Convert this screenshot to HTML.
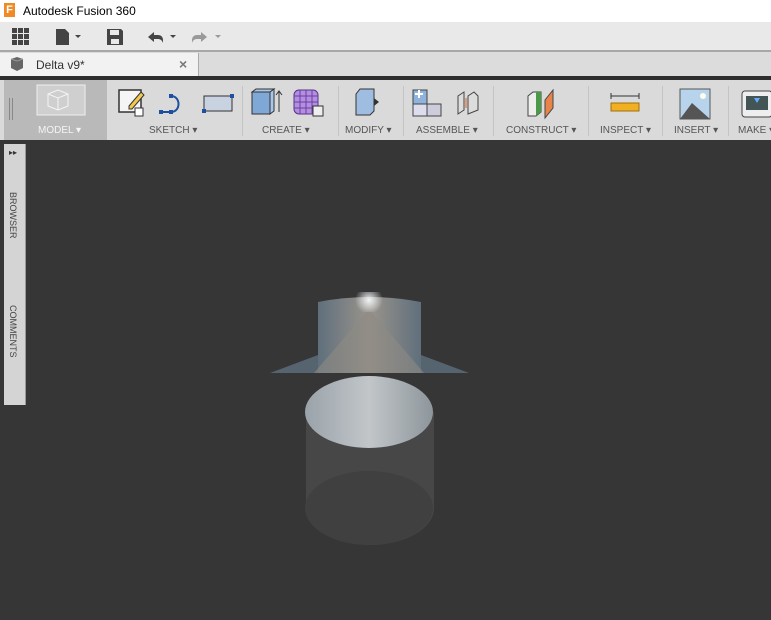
<!DOCTYPE html>
<html><head><style>
body{margin:0;width:771px;height:620px;overflow:hidden;background:#363636;font-family:"Liberation Sans",sans-serif;position:relative}
.a{position:absolute}
.lbl{position:absolute;top:125px;font-size:10px;color:#555;white-space:nowrap}
.sep{position:absolute;top:86px;width:1px;height:50px;background:#c4c4c4}
</style></head><body>
<div class="a" style="left:0;top:0;width:771px;height:22px;background:#fff"></div>
<div class="a" style="left:4px;top:3px;width:11px;height:14px;background:#f08a24;color:#fff;font-size:11px;font-weight:bold;line-height:14px;text-align:center">F</div>
<div class="a" style="left:23px;top:4px;font-size:12px;color:#000">Autodesk Fusion 360</div>
<div class="a" style="left:0;top:22px;width:771px;height:30px;background:#e9e9e9;border-bottom:2px solid #a8a8a8;box-sizing:border-box"></div>
<svg class="a" style="left:0;top:22px" width="240" height="30">
<g fill="#444"><rect x="12" y="6" width="5" height="5"/><rect x="18" y="6" width="5" height="5"/><rect x="24" y="6" width="5" height="5"/><rect x="12" y="12" width="5" height="5"/><rect x="18" y="12" width="5" height="5"/><rect x="24" y="12" width="5" height="5"/><rect x="12" y="18" width="5" height="5"/><rect x="18" y="18" width="5" height="5"/><rect x="24" y="18" width="5" height="5"/>
<path d="M56 7h9l4 4v12h-13z"/><path d="M75 13h6l-3 3z"/>
<path d="M107 7h14l2 2v14h-16z"/></g><rect x="110" y="8" width="9" height="5" fill="#e9e9e9"/><rect x="111" y="17" width="8" height="5" fill="#e9e9e9"/>
<path d="M148 15l6-5v3h4c3 0 5 2 5 5v3c-1-3-3-4-5-4h-4v3z" fill="#444"/><path d="M170 13h6l-3 3z" fill="#444"/>
<path d="M207 15l-6-5v3h-4c-3 0-5 2-5 5v3c1-3 3-4 5-4h4v3z" fill="#999"/><path d="M215 13h6l-3 3z" fill="#999"/>
</svg>
<div class="a" style="left:0;top:52px;width:771px;height:24px;background:#dcdcdc"></div>
<div class="a" style="left:0;top:53px;width:198px;height:23px;background:#f2f2f2;border-right:1px solid #aaa"></div>
<svg class="a" style="left:9px;top:56px" width="16" height="16"><path d="M2 3l6-2 6 2v9l-6 3-6-3z" fill="#666"/><path d="M2 3l6 2 6-2" stroke="#999" fill="none"/></svg>
<div class="a" style="left:36px;top:58px;font-size:12px;color:#333">Delta v9*</div>
<div class="a" style="left:179px;top:56px;font-size:14px;color:#777;font-weight:bold">×</div>
<div class="a" style="left:0;top:76px;width:771px;height:4px;background:#2e2e2e"></div>
<div class="a" style="left:0;top:80px;width:771px;height:60px;background:#dadada"></div>
<div class="a" style="left:4px;top:80px;width:103px;height:60px;background:#b9b9b9"></div>
<div class="a" style="left:9px;top:98px;height:22px;border-left:1px solid #888;border-right:1px solid #888;width:2px"></div>
<svg class="a" style="left:36px;top:84px" width="50" height="32"><rect x="1" y="1" width="48" height="30" fill="#cfcfcf" stroke="#eee"/><path d="M12 10l10-4 10 4v12l-10 4-10-4z M12 10l10 4 10-4 M22 14v12" stroke="#f4f4f4" fill="none"/></svg>
<div class="lbl" style="left:38px;color:#f4f4f4">MODEL ▾</div>
<svg class="a" style="left:115px;top:86px" width="125" height="34">
<rect x="4" y="4" width="22" height="22" fill="#f5f5f5" stroke="#333" stroke-width="1.5"/><path d="M14 20l12-14 3 3-12 14h-3z" fill="#f2c94c" stroke="#333"/><path d="M20 22h8v8h-8z" fill="#fff" stroke="#333"/>
<path d="M46 26h10c10 0 10-16 0-16" stroke="#1f4f9f" stroke-width="2" fill="none"/><rect x="44" y="24" width="4" height="4" fill="#1f4f9f"/><rect x="54" y="24" width="4" height="4" fill="#1f4f9f"/><rect x="54" y="8" width="4" height="4" fill="#1f4f9f"/>
<rect x="89" y="10" width="28" height="15" fill="#c9d2e0" stroke="#333"/><rect x="87" y="23" width="4" height="4" fill="#1f4f9f"/><rect x="115" y="8" width="4" height="4" fill="#1f4f9f"/>
</svg>
<div class="lbl" style="left:149px">SKETCH ▾</div>
<div class="sep" style="left:242px"></div>
<svg class="a" style="left:248px;top:86px" width="80" height="34">
<path d="M4 6h18v22h-18z" fill="#7fa8d6" stroke="#333"/><path d="M4 6l4-3h18l-4 3zM22 6l4-3v22l-4 3z" fill="#a9c7e8" stroke="#333"/><path d="M31 26v-20M28 9l3-4 3 4" stroke="#333" fill="none"/>
<rect x="46" y="4" width="24" height="24" rx="5" fill="#b48ee0" stroke="#553388"/><path d="M52 4v24M58 4v24M64 4v24M46 10h24M46 16h24M46 22h24" stroke="#6a3fa0"/><rect x="65" y="20" width="10" height="10" fill="#eee" stroke="#333"/>
</svg>
<div class="lbl" style="left:262px">CREATE ▾</div>
<div class="sep" style="left:338px"></div>
<svg class="a" style="left:350px;top:86px" width="40" height="34"><path d="M6 8l4-5h14v22l-4 4h-14z" fill="#9fbde0" stroke="#333"/><path d="M24 12l5 4-5 4z" fill="#333"/></svg>
<div class="lbl" style="left:345px">MODIFY ▾</div>
<div class="sep" style="left:403px"></div>
<svg class="a" style="left:410px;top:86px" width="80" height="34"><rect x="3" y="4" width="14" height="14" fill="#8fb3dd" stroke="#444"/><rect x="3" y="18" width="14" height="12" fill="#dde" stroke="#444"/><rect x="17" y="18" width="14" height="12" fill="#ccd" stroke="#444"/><path d="M5 8h8M9 4v8" stroke="#fff" stroke-width="2"/><path d="M48 28v-18l6-4v18zM58 28v-18l6-4 4 4v14z" fill="#ddd" stroke="#444"/><path d="M56 12v10" stroke="#e06020"/></svg>
<div class="lbl" style="left:416px">ASSEMBLE ▾</div>
<div class="sep" style="left:493px"></div>
<svg class="a" style="left:525px;top:86px" width="40" height="34"><path d="M3 10l5-4h8v20l-5 4h-8z" fill="#eee" stroke="#444"/><path d="M11 6h5v20l-5 4z" fill="#4a9a4a"/><path d="M20 14l8-10v18l-8 10z" fill="#e8834a" stroke="#444"/></svg>
<div class="lbl" style="left:506px">CONSTRUCT ▾</div>
<div class="sep" style="left:588px"></div>
<svg class="a" style="left:608px;top:86px" width="36" height="34"><path d="M3 10h28M3 7v6M31 7v6" stroke="#333"/><rect x="3" y="17" width="28" height="8" fill="#f0b020" stroke="#a07010"/></svg>
<div class="lbl" style="left:600px">INSPECT ▾</div>
<div class="sep" style="left:662px"></div>
<svg class="a" style="left:679px;top:86px" width="32" height="34"><rect x="1" y="3" width="30" height="30" fill="#b8d4ec" stroke="#555"/><path d="M1 33l12-16 18 16z" fill="#555"/><circle cx="24" cy="10" r="3" fill="#ffe"/></svg>
<div class="lbl" style="left:674px">INSERT ▾</div>
<div class="sep" style="left:728px"></div>
<svg class="a" style="left:740px;top:86px" width="31" height="34"><rect x="2" y="5" width="30" height="26" rx="3" fill="#eee" stroke="#444"/><rect x="6" y="10" width="22" height="14" fill="#455"/><path d="M14 12h6l-3 5z" fill="#6af"/></svg>
<div class="lbl" style="left:738px">MAKE ▾</div>
<div class="a" style="left:4px;top:144px;width:21px;height:261px;background:#d4d4d4;border-right:1px solid #999"></div>
<div class="a" style="left:9px;top:148px;font-size:8px;color:#333">▸▸</div>
<div class="a" style="left:8px;top:192px;writing-mode:vertical-rl;font-size:9px;color:#444">BROWSER</div>
<div class="a" style="left:8px;top:305px;writing-mode:vertical-rl;font-size:9px;color:#444">COMMENTS</div>
<svg class="a" style="left:0;top:0" width="771" height="620">
<defs>
<linearGradient id="cy" x1="0" x2="1"><stop offset="0" stop-color="#9aa3aa"/><stop offset=".5" stop-color="#c2c6c9"/><stop offset="1" stop-color="#8d969c"/></linearGradient>
<linearGradient id="cn" x1="0" x2="1"><stop offset="0" stop-color="#5f6f7c"/><stop offset=".5" stop-color="#9a948c"/><stop offset="1" stop-color="#5f6f7c"/></linearGradient>
<radialGradient id="hl" cx="369" cy="300" r="14" gradientUnits="userSpaceOnUse"><stop offset="0" stop-color="#f0f4f6"/><stop offset="1" stop-color="#f0f4f6" stop-opacity="0"/></radialGradient>
</defs>
<path d="M306 412v96a64 37 0 0 0 128 0v-96z" fill="#474747"/>
<ellipse cx="369" cy="508" rx="64" ry="37" fill="#404040"/>
<path d="M270 373l48-18h103l48 18z" fill="#566470"/>
<path d="M318 302q51-10 103 0v71h-103z" fill="url(#cn)"/>
<path d="M369 309l-55 64h110z" fill="#8e8a84" opacity=".6"/>
<rect x="350" y="292" width="38" height="20" fill="url(#hl)"/>
<ellipse cx="369" cy="412" rx="64" ry="36" fill="url(#cy)"/>
</svg>
</body></html>
